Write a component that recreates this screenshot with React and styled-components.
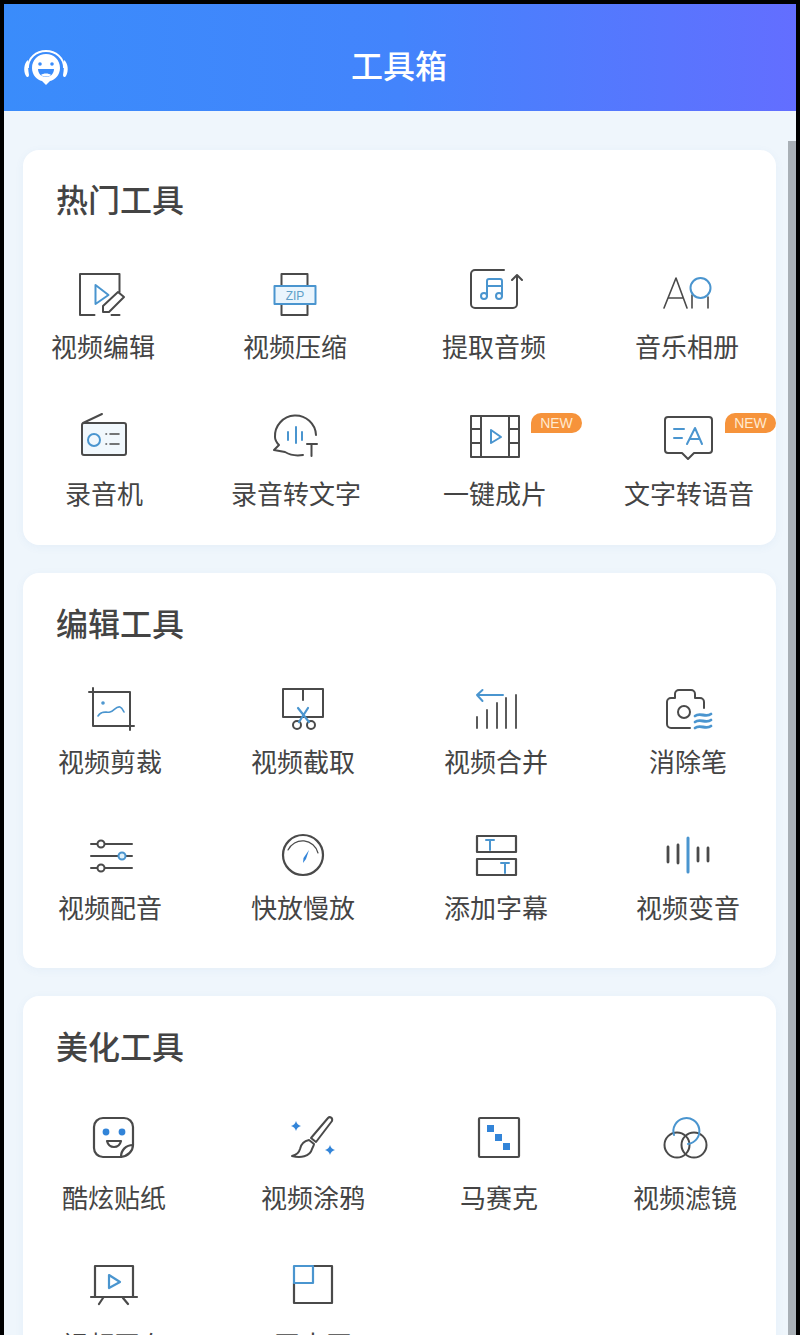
import React from "react";
import styled, { createGlobalStyle } from "styled-components";

const GlobalStyle = createGlobalStyle`
  html, body {
    margin: 0;
    background: #000;
    font-family: "Noto Sans CJK SC", "Noto Sans", sans-serif;
  }
`;

const Screen = styled.div`
  box-sizing: border-box;
  height: 1335px;
  padding: 4px 4px 0;
  background: #000;
`;

const Frame = styled.div`
  position: relative;
  height: 100%;
  overflow: hidden;
  background: #eff6fc;
`;

const Header = styled.header`
  box-sizing: border-box;
  display: grid;
  grid-template-columns: 1fr auto 1fr;
  align-items: center;
  height: 107px;
  padding: 37px 21px 24px 19px;
  background: linear-gradient(90deg, #3a8cfb 0%, #4384fc 50%, #636eff 100%);
`;

const HeaderTitle = styled.h1`
  margin: 0;
  color: #fff;
  font-size: 32px;
  line-height: 46px;
  font-weight: 500;
`;

const Scrollbar = styled.div`
  position: absolute;
  top: 137px;
  right: 0;
  bottom: 0;
  width: 8px;
  background: #a9b0b6;
`;

const Content = styled.main`
  display: flex;
  flex-direction: column;
  gap: 28px;
  padding: 39px 20px 0 19px;
`;

const Card = styled.section`
  padding: ${(p) => p.$top}px 0 ${(p) => p.$bottom}px;
  border-radius: 16px;
  background: #fff;
  box-shadow: 0 2px 10px rgba(70, 120, 190, 0.06);
`;

const CardTitle = styled.h2`
  margin: 0;
  padding-left: 33px;
  color: #444;
  font-size: 32px;
  line-height: 44px;
  font-weight: 500;
`;

const Row = styled.div`
  display: flex;
  margin-top: ${(p) => p.$top}px;
`;

const Tool = styled.div`
  position: relative;
  flex: none;
  display: flex;
  flex-direction: column;
  align-items: center;
  gap: ${(p) => p.$gap}px;
  width: 130px;
  margin-left: ${(p) => p.$shift}px;
`;

const Label = styled.span`
  color: #444;
  font-size: 26px;
  line-height: 36px;
  white-space: nowrap;
`;

const Badge = styled.span`
  position: absolute;
  top: 9px;
  left: 101px;
  width: 51px;
  height: 20px;
  border-radius: 10px 10px 10px 0;
  background: #f6933b;
  color: #ffe9d0;
  font-family: "Liberation Sans", sans-serif;
  font-size: 14px;
  line-height: 20px;
  text-align: center;
`;

const IconBox = styled.svg`
  display: block;
  flex: none;
  width: 60px;
  height: 60px;
  fill: none;
  stroke-linecap: round;
  stroke-linejoin: round;
`;

const Ink = styled.g`
  stroke: #4a4a4a;
  stroke-width: ${(p) => p.$w || 2};
`;

const Accent = styled.g`
  stroke: #4a95cf;
  stroke-width: ${(p) => p.$w || 2};
`;

const Solid = styled.g`
  fill: #3284d8;
`;

const ZipText = styled.text`
  fill: #5f9fc8;
  font-family: "Liberation Sans", sans-serif;
  font-size: 12px;
  text-anchor: middle;
`;

const Logo = styled.svg`
  display: block;
  width: 46px;
  height: 36px;
  margin-top: 8px;
`;

const HeadsetLogo = () => (
  <Logo viewBox="0 0 46 36">
    <path d="M5 18C5 8 13 1 23 1s18 7 18 17" fill="none" stroke="#fff" strokeWidth="1.8" />
    <path d="M5 10C1 13 0 21 3 26c1 2 3 1 3-1-1-5-1-10-1-15z" fill="#fff" />
    <path d="M41 10c4 3 5 11 2 16-1 2-3 1-3-1 1-5 1-10 1-15z" fill="#fff" />
    <path d="M23 4c8 0 14 6 14 14 0 7-5 12-10 13l-4 4-4-4C14 30 9 25 9 18 9 10 15 4 23 4z" fill="#fff" />
    <circle cx="17" cy="14" r="1.8" fill="#3a8cfb" />
    <circle cx="29" cy="14" r="1.8" fill="#3a8cfb" />
    <path d="M15 19h16c0 5-4 8-8 8s-8-3-8-8z" fill="#3a8cfb" />
    <path d="M18 25c2-2 8-2 10 0-3 2-7 2-10 0z" fill="#fff" />
  </Logo>
);

const VideoEditIcon = () => (
  <IconBox viewBox="0 0 60 60">
    <Ink>
      <path d="M46.5 27V9H7v41h14.5M38.5 50h8" />
      <path d="M30 41l15-14 6 5-15 15h-6z" />
    </Ink>
    <Accent><path d="M22.5 20l13 10-13 9z" /></Accent>
  </IconBox>
);

const ZipIcon = () => (
  <IconBox viewBox="0 0 60 60">
    <Ink><path d="M16.5 21V9h26v12M16.5 39v11h26V39" /></Ink>
    <Accent><rect x="9.5" y="21" width="41" height="18" fill="#eaf5fd" /></Accent>
    <ZipText x="30" y="35">ZIP</ZipText>
  </IconBox>
);

const ExtractAudioIcon = () => (
  <IconBox viewBox="0 0 60 60">
    <Ink><path d="M40 5H11a4 4 0 0 0-4 4v30a4 4 0 0 0 4 4h38a4 4 0 0 0 4-4V10M48 15l5-5 5 5" /></Ink>
    <Accent>
      <path d="M23 31V16a2 2 0 0 1 2-2h11a2 2 0 0 1 2 2v15M23 21h15" />
      <circle cx="20" cy="31" r="3" />
      <circle cx="35" cy="31" r="3" />
    </Accent>
  </IconBox>
);

const AlbumIcon = () => (
  <IconBox viewBox="0 0 60 60">
    <Ink $w={1.6}><path d="M7 43l12-30 11 30M11 33h15M35 30v13M51 32v11" /></Ink>
    <Accent><circle cx="43.5" cy="23" r="10" /></Accent>
  </IconBox>
);

const RadioIcon = () => (
  <IconBox viewBox="0 0 60 60">
    <rect x="8" y="19" width="44" height="32" rx="2" fill="#f1f8fd" />
    <Ink><path d="M9 19l19-9M10 19h40a2 2 0 0 1 2 2v28a2 2 0 0 1-2 2H10a2 2 0 0 1-2-2V21a2 2 0 0 1 2-2z" /></Ink>
    <Accent><circle cx="20" cy="36" r="6" /></Accent>
    <Ink $w={1.6}><path d="M36 30h9M36 40h9M32 30h.5M32 40h.5" /></Ink>
  </IconBox>
);

const SpeechTextIcon = () => (
  <IconBox viewBox="0 0 60 60">
    <Ink><path d="M50 31A20.5 20.5 0 0 0 9 33c0 3 2 6 4 8l-5 5 11 2c5 3 12 4 18 3M41 40h10M45.5 40v12" /></Ink>
    <Accent><path d="M22 28v8M30 23v16M36 28v8" /></Accent>
  </IconBox>
);

const FilmIcon = () => (
  <IconBox viewBox="0 0 60 60">
    <Ink><path d="M6 12h48v41H6zM16 12v41M44 12v41M6 25h10M6 39h10M44 25h10M44 39h10" /></Ink>
    <Accent><path d="M26 26l10 7-10 6z" /></Accent>
  </IconBox>
);

const TextSpeechIcon = () => (
  <IconBox viewBox="0 0 60 60">
    <Ink><path d="M9 13h41a3 3 0 0 1 3 3v30a3 3 0 0 1-3 3H35l-6 6-6-6H9a3 3 0 0 1-3-3V16a3 3 0 0 1 3-3z" /></Ink>
    <Accent><path d="M15 25h10M15 34h8M28 40l8-16 7 16M30.5 35h10" /></Accent>
  </IconBox>
);

const CropIcon = () => (
  <IconBox viewBox="0 0 60 60">
    <Ink><path d="M9 13h41v38M13 9v38h41" /></Ink>
    <Accent $w={1.6}>
      <circle cx="23" cy="24" r="1" />
      <path d="M18 37c4-6 8-3 12-4s6-6 10-5c2 .5 3 3 4 5" />
    </Accent>
  </IconBox>
);

const TrimIcon = () => (
  <IconBox viewBox="0 0 60 60">
    <Ink>
      <path d="M10 10h40v28H10zM30 10v11" />
      <circle cx="24" cy="46" r="4" />
      <circle cx="38" cy="46" r="4" />
    </Ink>
    <Accent $w={2.2}><path d="M25 29l11 14M35 29L26 43" /></Accent>
  </IconBox>
);

const MergeIcon = () => (
  <IconBox viewBox="0 0 60 60">
    <Ink $w={1.8}><path d="M11 38v11M21 31v18M31 24v25M40 19v30M50 16v33" /></Ink>
    <Accent><path d="M37 16H11M16.5 11L11 16l5.5 6" /></Accent>
  </IconBox>
);

const EraserIcon = () => (
  <IconBox viewBox="0 0 60 60">
    <Ink>
      <path d="M32 49H13a4 4 0 0 1-4-4V23a4 4 0 0 1 4-4h4v-4a4 4 0 0 1 4-4h12a4 4 0 0 1 4 4v4h5a4 4 0 0 1 4 4v6" />
      <circle cx="26" cy="33" r="6" />
    </Ink>
    <Accent $w={2.8}>
      <path d="M37 37c5-4 11 2 16-2M37 43c5-4 11 2 16-2M37 49c5-4 11 2 16-2" />
    </Accent>
  </IconBox>
);

const SlidersIcon = () => (
  <IconBox viewBox="0 0 60 60">
    <Ink><path d="M11 19h41M11 31h41M11 43h41" /></Ink>
    <Ink><circle cx="21" cy="19" r="3.5" fill="#fff" /><circle cx="21" cy="43" r="3.5" fill="#fff" /></Ink>
    <Accent><circle cx="42" cy="31" r="3.5" fill="#dff1fb" /></Accent>
  </IconBox>
);

const GaugeIcon = () => (
  <IconBox viewBox="0 0 60 60">
    <Ink $w={2.2}><circle cx="30" cy="30" r="20" /></Ink>
    <Ink $w={1.2}><path d="M15 25a16 16 0 0 1 30 3" /></Ink>
    <Solid><path d="M36 25l-3 9-3 4 .5-5z" /></Solid>
  </IconBox>
);

const SubtitleIcon = () => (
  <IconBox viewBox="0 0 60 60">
    <Ink $w={2.2}><path d="M11 11h39v16H11zM11 34h39v16H11z" /></Ink>
    <Accent><path d="M20 15h8M24 15v10M35 38h8M39 38v10" /></Accent>
  </IconBox>
);

const VoiceIcon = () => (
  <IconBox viewBox="0 0 60 60">
    <Ink $w={2.8}><path d="M10 22v15M20 20v18M40 23v13M50 23v13" /></Ink>
    <Accent $w={3}><path d="M30 13v34" /></Accent>
  </IconBox>
);

const StickerIcon = () => (
  <IconBox viewBox="0 0 60 60">
    <Ink $w={2.2}>
      <path d="M49 37V19a9 9 0 0 0-9-9H19a9 9 0 0 0-9 9v21a9 9 0 0 0 9 9h18" />
      <path d="M37 49c0-7 5-12 12-12 0 6-5 11-12 12z" />
      <path d="M23 33h14c-1 4-3 6-7 6s-6-2-7-6z" />
    </Ink>
    <Solid><circle cx="22" cy="24" r="3.4" /><circle cx="38" cy="24" r="3.4" /></Solid>
  </IconBox>
);

const BrushIcon = () => (
  <IconBox viewBox="0 0 60 60">
    <Ink>
      <path d="M45 10c2-2 5 0 4 3L33 34l-5-4z" />
      <path d="M26 32c-5 1-8 4-9 9-1 4-4 6-8 7 8 2 18 1 20-7 1-2 2-4 2-5z" />
    </Ink>
    <Solid>
      <path d="M13 13q1 4 5 5-4 1-5 5-1-4-5-5 4-1 5-5z" />
      <path d="M47 37q1 4 5 5-4 1-5 5-1-4-5-5 4-1 5-5z" />
    </Solid>
  </IconBox>
);

const MosaicIcon = () => (
  <IconBox viewBox="0 0 60 60">
    <Ink $w={2.2}><rect x="10" y="10" width="40" height="39" rx="1" /></Ink>
    <Solid>
      <rect x="18" y="17" width="7" height="7" />
      <rect x="26" y="26" width="7" height="7" />
      <rect x="34" y="35" width="7" height="7" />
    </Solid>
  </IconBox>
);

const FilterIcon = () => (
  <IconBox viewBox="0 0 60 60">
    <Ink><circle cx="22" cy="37" r="12.5" /><circle cx="39" cy="37" r="12.5" /></Ink>
    <Accent><path d="M19 27A13 13 0 1 1 33 36" /></Accent>
  </IconBox>
);

const ProjectorIcon = () => (
  <IconBox viewBox="0 0 60 60">
    <Ink $w={2.2}><path d="M11 42V11h38v31M7 42h46M19 43l-4 6M39 43l5 6" /></Ink>
    <Accent $w={2.2}><path d="M25 20l11 7-11 6z" /></Accent>
  </IconBox>
);

const PipIcon = () => (
  <IconBox viewBox="0 0 60 60">
    <Ink $w={2.2}><path d="M30 11h19v37H11V28" /></Ink>
    <Accent $w={2.2}><rect x="11" y="11" width="19" height="17" /></Accent>
  </IconBox>
);

const sections = [
  {
    title: "热门工具",
    top: 26,
    bottom: 34,
    rows: [
      {
        top: 45,
        gap: 3,
        tools: [
          { label: "视频编辑", Icon: VideoEditIcon, at: 103 },
          { label: "视频压缩", Icon: ZipIcon, at: 295 },
          { label: "提取音频", Icon: ExtractAudioIcon, at: 494 },
          { label: "音乐相册", Icon: AlbumIcon, at: 687 },
        ],
      },
      {
        top: 40,
        gap: 11,
        tools: [
          { label: "录音机", Icon: RadioIcon, at: 104 },
          { label: "录音转文字", Icon: SpeechTextIcon, at: 296 },
          { label: "一键成片", Icon: FilmIcon, at: 495, isNew: true },
          { label: "文字转语音", Icon: TextSpeechIcon, at: 689, isNew: true },
        ],
      },
    ],
  },
  {
    title: "编辑工具",
    top: 27,
    bottom: 43,
    rows: [
      {
        top: 35,
        gap: 4,
        tools: [
          { label: "视频剪裁", Icon: CropIcon, at: 110 },
          { label: "视频截取", Icon: TrimIcon, at: 303 },
          { label: "视频合并", Icon: MergeIcon, at: 496 },
          { label: "消除笔", Icon: EraserIcon, at: 688 },
        ],
      },
      {
        top: 46,
        gap: 4,
        tools: [
          { label: "视频配音", Icon: SlidersIcon, at: 110 },
          { label: "快放慢放", Icon: GaugeIcon, at: 303 },
          { label: "添加字幕", Icon: SubtitleIcon, at: 496 },
          { label: "视频变音", Icon: VoiceIcon, at: 688 },
        ],
      },
    ],
  },
  {
    title: "美化工具",
    top: 27,
    bottom: 32,
    rows: [
      {
        top: 41,
        gap: 11,
        tools: [
          { label: "酷炫贴纸", Icon: StickerIcon, at: 114 },
          { label: "视频涂鸦", Icon: BrushIcon, at: 313 },
          { label: "马赛克", Icon: MosaicIcon, at: 499 },
          { label: "视频滤镜", Icon: FilterIcon, at: 685 },
        ],
      },
      {
        top: 40,
        gap: 11,
        tools: [
          { label: "视频画布", Icon: ProjectorIcon, at: 114 },
          { label: "画中画", Icon: PipIcon, at: 313 },
        ],
      },
    ],
  },
];

// tools sit on slightly different centres per row, so margins come from the page x
const CARD_LEFT = 23;
const TOOL_WIDTH = 130;

const shiftFor = (tools, i) =>
  i === 0
    ? tools[0].at - CARD_LEFT - TOOL_WIDTH / 2
    : tools[i].at - tools[i - 1].at - TOOL_WIDTH;

export default function App() {
  return (
    <Screen>
      <GlobalStyle />
      <Frame>
        <Header>
          <HeadsetLogo />
          <HeaderTitle>工具箱</HeaderTitle>
        </Header>
        <Content>
          {sections.map((section) => (
            <Card key={section.title} $top={section.top} $bottom={section.bottom}>
              <CardTitle>{section.title}</CardTitle>
              {section.rows.map((row, r) => (
                <Row key={r} $top={row.top}>
                  {row.tools.map(({ label, Icon, isNew }, i) => (
                    <Tool key={label} $gap={row.gap} $shift={shiftFor(row.tools, i)}>
                      <Icon />
                      <Label>{label}</Label>
                      {isNew && <Badge>NEW</Badge>}
                    </Tool>
                  ))}
                </Row>
              ))}
            </Card>
          ))}
        </Content>
        <Scrollbar />
      </Frame>
    </Screen>
  );
}
